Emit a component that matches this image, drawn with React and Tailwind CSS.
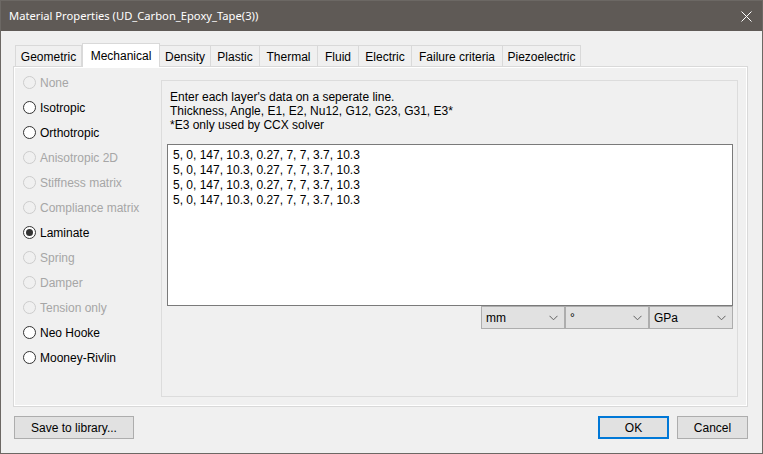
import React from "react";

const SANS = { fontFamily: '"Liberation Sans", Arial, sans-serif' };

const tabs = [
  ["Geometric", "w-[67px]"],
  ["Mechanical", "w-[78px]"],
  ["Density", "w-[51px]"],
  ["Plastic", "w-[49px]"],
  ["Thermal", "w-[58px]"],
  ["Fluid", "w-[41px]"],
  ["Electric", "w-[53px]"],
  ["Failure criteria", "w-[91px]"],
  ["Piezoelectric", "w-[78px]"],
];

const radios = [
  ["None", "disabled"],
  ["Isotropic", "on"],
  ["Orthotropic", "on"],
  ["Anisotropic 2D", "disabled"],
  ["Stiffness matrix", "disabled"],
  ["Compliance matrix", "disabled"],
  ["Laminate", "checked"],
  ["Spring", "disabled"],
  ["Damper", "disabled"],
  ["Tension only", "disabled"],
  ["Neo Hooke", "on"],
  ["Mooney-Rivlin", "on"],
];

function Radio({ state }) {
  const disabled = state === "disabled";
  return (
    <svg width="13" height="13" viewBox="0 0 13 13" className="shrink-0">
      <circle
        cx="6.5"
        cy="6.5"
        r="6"
        fill={disabled ? "#f0f0f0" : "#ffffff"}
        stroke={disabled ? "#cccccc" : "#333333"}
        strokeWidth="1"
      />
      {state === "checked" && <circle cx="6.5" cy="6.5" r="3.5" fill="#333333" />}
    </svg>
  );
}

function Chevron() {
  return (
    <svg width="9" height="6" viewBox="0 0 9 6" className="shrink-0">
      <polyline points="0.5,0.8 4.5,4.8 8.5,0.8" fill="none" stroke="#606060" strokeWidth="1" />
    </svg>
  );
}

function Select({ label }) {
  return (
    <div className="w-[84px] h-[23px] bg-[#e1e1e1] border border-[#adadad] flex items-center justify-between pl-[4px] pr-[6px] text-[12px] text-black">
      <span className="leading-none">{label}</span>
      <Chevron />
    </div>
  );
}

const line = "5, 0, 147, 10.3, 0.27, 7, 7, 3.7, 10.3";

export default function App() {
  return (
    <div className="w-[763px] h-[454px] flex flex-col border border-[#6c6864] bg-[#f0f0f0]" style={SANS}>
      {/* Title bar */}
      <div className="h-[30px] bg-[#5f5a56] flex items-center justify-between pl-[8px] pr-[10px] shrink-0">
        <span
          className="text-white text-[11.2px] leading-none"
          style={{ fontFamily: '"Noto Sans", "Open Sans", sans-serif' }}
        >
          Material Properties (UD_Carbon_Epoxy_Tape(3))
        </span>
        <svg width="11" height="11" viewBox="0 0 11 11">
          <line x1="0.5" y1="0.5" x2="10.5" y2="10.5" stroke="#ffffff" strokeWidth="1" />
          <line x1="10.5" y1="0.5" x2="0.5" y2="10.5" stroke="#ffffff" strokeWidth="1" />
        </svg>
      </div>

      {/* Body */}
      <div className="flex-1 flex flex-col pt-[12px] pl-[12px] pr-[14px]">
        {/* Tabs */}
        <div className="flex items-end h-[23px] ml-[2px] relative z-10">
          {tabs.map(([t, w]) =>
            t === "Mechanical" ? (
              <div
                key={t}
                className={`${w} h-[24px] -mb-[1px] bg-white border border-b-0 border-[#d9d9d9] flex items-start justify-center pt-[3px] text-[12px] text-black`}
              >
                {t}
              </div>
            ) : (
              <div
                key={t}
                className={`${w} h-[21px] bg-[#f0f0f0] border border-b-0 border-l-0 first:border-l border-[#d9d9d9] flex items-center justify-center pt-[1px] text-[12px] text-black`}
              >
                {t}
              </div>
            )
          )}
        </div>

        {/* Panel */}
        <div className="w-[735px] h-[341px] border border-[#d9d9d9] shadow-[inset_0_0_0_1px_#ffffff] flex">
          {/* Radio column */}
          <div className="w-[147px] flex flex-col pt-[3px] pl-[9px]">
            {radios.map(([label, state]) => (
              <div key={label} className="h-[25px] flex items-center gap-[4px]">
                <Radio state={state} />
                <span
                  className={`text-[12px] leading-none ${state === "disabled" ? "text-[#a6a6a6]" : "text-black"}`}
                >
                  {label}
                </span>
              </div>
            ))}
          </div>

          {/* Group */}
          <div className="flex-1 mt-[13px] mb-[9px] mr-[9px] border border-[#dcdcdc] flex flex-col pl-[5px] pr-[4px] pt-[9px]">
            <div className="pl-[3px] text-[12px] leading-[14px] text-black">
              <div>Enter each layer's data on a seperate line.</div>
              <div>Thickness, Angle, E1, E2, Nu12, G12, G23, G31, E3*</div>
              <div>*E3 only used by CCX solver</div>
            </div>
            <div className="mt-[12px] h-[162px] bg-white border border-[#7a7a7a] pl-[5px] pt-[3px] text-[12px] leading-[15px] text-black">
              <div>{line}</div>
              <div>{line}</div>
              <div>{line}</div>
              <div>{line}</div>
            </div>
            <div className="flex justify-end">
              <Select label="mm" />
              <Select label="°" />
              <Select label="GPa" />
            </div>
          </div>
        </div>

        {/* Buttons */}
        <div className="flex items-center mt-[9px] pl-[1px]">
          <button className="w-[120px] h-[23px] bg-[#e1e1e1] border border-[#adadad] text-[12px] text-black">
            Save to library...
          </button>
          <div className="flex-1" />
          <button className="w-[71px] h-[23px] bg-[#e1e1e1] border-2 border-[#0078d7] text-[12px] text-black">
            OK
          </button>
          <button className="w-[71px] h-[23px] ml-[8px] bg-[#e1e1e1] border border-[#adadad] text-[12px] text-black">
            Cancel
          </button>
        </div>
      </div>
    </div>
  );
}
